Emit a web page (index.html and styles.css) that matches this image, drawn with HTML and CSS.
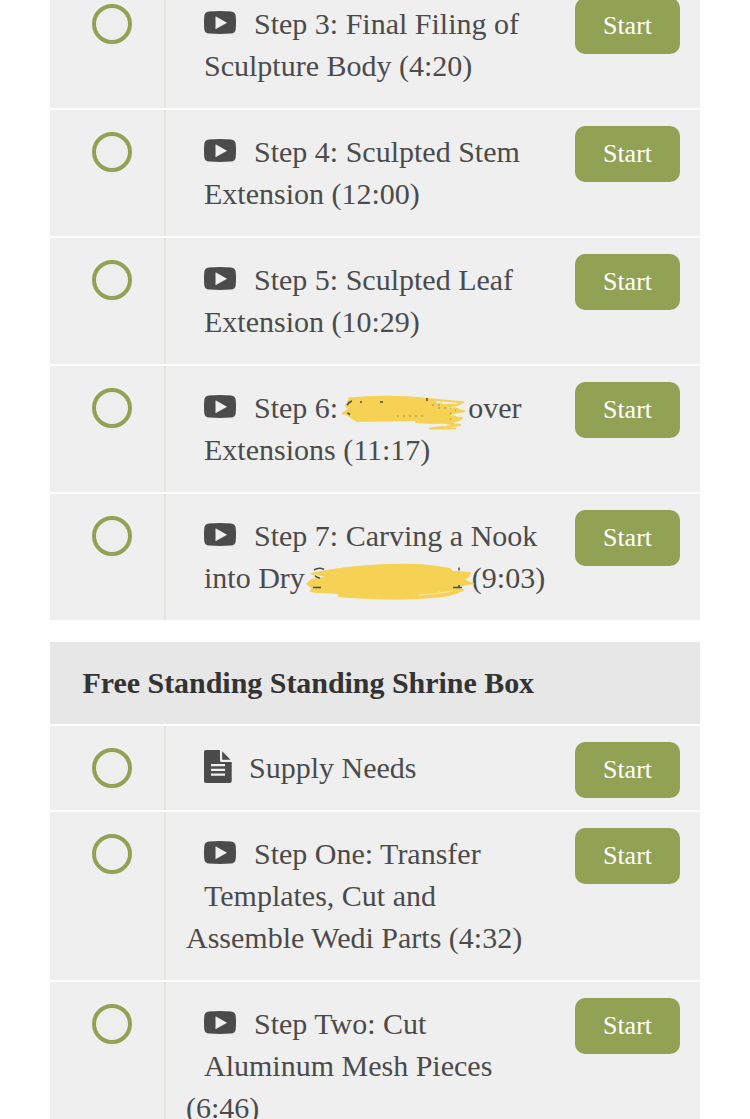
FILE: index.html
```html
<!DOCTYPE html>
<html lang="en">
<head>
  <meta charset="UTF-8">
  <meta name="viewport" content="width=device-width, initial-scale=1.0">
  <title>Course Curriculum</title>
  <link rel="stylesheet" href="styles.css">
</head>
<body>
  <!-- Shared icons -->
  <svg class="icon-defs" width="0" height="0">
    <symbol id="icon-video" viewBox="0 0 32 23">
      <path fill-rule="evenodd" d="M5 .4Q16-.4 27 .4Q31.300.7 31.700 5Q32.300 11.500 31.700 18Q31.300 22.300 27 22.600Q16 23.400 5 22.600Q.7 22.300.3 18Q-.3 11.500.3 5Q.7.700 5 .4ZM11.500 5.200V18.200L23 11.700Z"/>
    </symbol>
    <symbol id="icon-page" viewBox="0 0 28 33">
      <path fill-rule="evenodd" d="M2 0H16V10.500Q16 12 17.500 12H27.700V31Q27.700 33 25.700 33H2Q0 33 0 31V2Q0 0 2 0ZM7 14V16.200H21V14ZM7 18.700V21H21V18.700ZM7 23.600V25.800H21V23.600Z"/>
      <path d="M18.200 1.200L26.500 9.700H18.200Z"/>
    </symbol>
  </svg>

  <div class="curriculum">
    <!-- Previous section -->
    <div class="section">
      <div class="lesson">
        <div class="status"><span class="circle"></span></div>
        <div class="title"><svg class="icon video"><use href="#icon-video"/></svg>Step 3: Final Filing of<br>Sculpture Body (4:20)</div>
        <a class="start-btn">Start</a>
      </div>
      <div class="lesson">
        <div class="status"><span class="circle"></span></div>
        <div class="title"><svg class="icon video"><use href="#icon-video"/></svg>Step 4: Sculpted Stem<br>Extension (12:00)</div>
        <a class="start-btn">Start</a>
      </div>
      <div class="lesson">
        <div class="status"><span class="circle"></span></div>
        <div class="title"><svg class="icon video"><use href="#icon-video"/></svg>Step 5: Sculpted Leaf<br>Extension (10:29)</div>
        <a class="start-btn">Start</a>
      </div>
      <div class="lesson">
        <div class="status"><span class="circle"></span></div>
        <div class="title"><svg class="icon video"><use href="#icon-video"/></svg>Step 6:<span class="scribble small"><svg width="128" height="38" viewBox="340 394 128 38">
          <path class="blot" d="M350 397Q380 395 410 397L435 399L443 403L461 403L456 406L463 409L454 414L461 417L453 422L430 422L417 420L358 421L350 416L345 413L349 408L346 405Z"/>
          <path class="line" d="M350 397.500Q390 394 430 398T463 401Q458 406 443 404M344 412.500Q350 407 360 408M443 400L434 422M438 409L465 410Q447 415 438 415M434 416L463 417Q455 424 417 421M432 420L461 424Q446 426 431 427.500L456 427.500"/>
          <path class="gap light" d="M437 401.500L456 402.500M449 407L458 405.500M452 414.500L460 412M436 424L447 425"/>
          <path class="ink" d="M348 404Q350 401 353 400M348.500 412L351 413.500M428 397V400M381 401H384M361 401H363"/>
          <path class="ink dots" d="M398 415H425M433 404H443M439 407H452M451 413L457 409M451 419L455 414"/>
        </svg></span>over<br>Extensions (11:17)</div>
        <a class="start-btn">Start</a>
      </div>
      <div class="lesson">
        <div class="status"><span class="circle"></span></div>
        <div class="title"><svg class="icon video"><use href="#icon-video"/></svg>Step 7: Carving a Nook<br>into Dry<span class="scribble large"><svg width="172" height="38" viewBox="304 562 172 38">
          <path class="blot" d="M312 573Q350 565 390 564Q414 563 431 565L451 568L454 571L471 572L470 577L465 581L473 584L459 587L465 590Q457 596 435 598Q400 600 340 597L339 594L312 592L312 588L307 584L312 579L326 577Z"/>
          <path class="line" d="M313 574Q365 563 431 566M312 591Q330 594 344 587M340 596Q415 602 448 594Q459 592 464 590M430 568L450 569M445 572L471 573L463 580L474 584"/>
          <path class="ink" d="M315 570Q320 567 325 569.500M316 575.500Q317 577.500 321 578M314 587.500H322M460 567.500V570.500M454 587.500H463M460 585V588"/>
          <path class="gap" d="M420 595Q439 594 454 591M439 591L442 593"/>
        </svg></span>(9:03)</div>
        <a class="start-btn">Start</a>
      </div>
    </div>

    <!-- Shrine box section -->
    <div class="section">
      <div class="section-title">Free Standing Standing Shrine Box</div>
      <div class="lesson">
        <div class="status"><span class="circle"></span></div>
        <div class="title single"><svg class="icon page"><use href="#icon-page"/></svg>Supply Needs</div>
        <a class="start-btn">Start</a>
      </div>
      <div class="lesson">
        <div class="status"><span class="circle"></span></div>
        <div class="title"><svg class="icon video"><use href="#icon-video"/></svg>Step One: Transfer<br>Templates, Cut and<br>Assemble Wedi Parts (4:32)</div>
        <a class="start-btn">Start</a>
      </div>
      <div class="lesson">
        <div class="status"><span class="circle"></span></div>
        <div class="title"><svg class="icon video"><use href="#icon-video"/></svg>Step Two: Cut<br>Aluminum Mesh Pieces<br>(6:46)</div>
        <a class="start-btn">Start</a>
      </div>
    </div>
  </div>
</body>
</html>
```
FILE: styles.css
```css
body {
  font-family: "Liberation Serif", "Times New Roman", serif;
  margin: 0;
  height: 1119px;
  overflow: hidden;
  background-color: #fff;
  color: #4b4b4b;
}

.icon-defs {
  display: none;
}

.curriculum {
  width: 650px;
  margin: -18px auto 0;
}

.section {
  display: flex;
  flex-direction: column;
  gap: 2px;
  margin-bottom: 22px;
}

.section-title {
  padding: 20px 32.5px;
  background-color: #e7e7e7;
  color: #333;
  font-size: 30px;
  font-weight: bold;
  letter-spacing: -0.04px;
  line-height: 42px;
}

.lesson {
  display: flex;
  align-items: stretch;
  background-color: #efefef;
}

.status {
  box-sizing: border-box;
  width: 116px;
  padding: 22px 0 0 42px;
  border-right: 2px solid #e5e5de;
}

.circle {
  display: block;
  box-sizing: border-box;
  width: 40px;
  height: 40px;
  border: 4px solid #92a254;
  border-radius: 50%;
}

.title {
  flex: 1;
  padding: 21px 0 21px 20px;
  font-size: 30px;
  line-height: 42px;
  white-space: nowrap;
}

/* Indents only the first two lines of a title */
.title::before {
  content: "";
  float: left;
  width: 18px;
  height: 80px;
}

.title.single::before {
  height: 40px;
}

.icon {
  fill: #4b4b4b;
}

.icon.video {
  width: 32px;
  height: 23px;
  margin-right: 18px;
  vertical-align: 0;
}

.icon.page {
  width: 28px;
  height: 33px;
  margin-right: 17px;
  vertical-align: -5px;
}

.start-btn {
  width: 105px;
  height: 56px;
  margin: 16px 20px 0 0;
  border-radius: 10px;
  background-color: #92a254;
  color: #fff;
  font-size: 26px;
  line-height: 56px;
  text-align: center;
}

/* Marker strokes over part of a title */
.scribble {
  display: inline-block;
  position: relative;
  height: 20px;
}

.scribble.small {
  width: 130px;
}

.scribble.large {
  width: 167px;
}

.scribble svg {
  position: absolute;
  left: 1px;
  top: -3px;
}

.scribble.large svg {
  left: -2px;
  top: -6px;
}

.blot {
  fill: #f6d254;
}

.line {
  fill: none;
  stroke: #f6d254;
  stroke-width: 2.2;
  stroke-linecap: round;
  stroke-linejoin: round;
}

.ink {
  fill: none;
  stroke: #4b4b4b;
  stroke-width: 1.5;
}

.ink.dots {
  stroke: #a38d45;
  stroke-width: 1;
  stroke-dasharray: 2 4;
}

.gap {
  fill: none;
  stroke: #f8e5a5;
  stroke-width: 1;
}

.gap.light {
  stroke: #efefef;
}
```
